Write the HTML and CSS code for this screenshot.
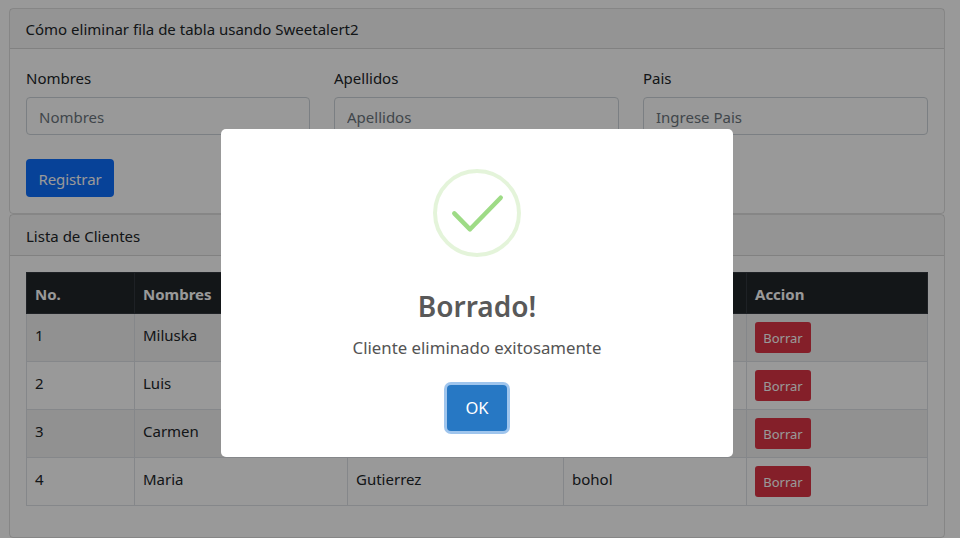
FILE: index.html
```html
<!DOCTYPE html>
<html lang="es">
<head>
<meta charset="utf-8">
<title>Cómo eliminar fila de tabla usando Sweetalert2</title>
<link rel="stylesheet" href="styles.css">
</head>
<body>
<main class="page">
  <section class="card">
    <header class="card-header">Cómo eliminar fila de tabla usando Sweetalert2</header>
    <div class="card-body">
      <form class="form-grid">
        <div class="field"><label>Nombres</label><input placeholder="Nombres"></div>
        <div class="field"><label>Apellidos</label><input placeholder="Apellidos"></div>
        <div class="field"><label>Pais</label><input placeholder="Ingrese Pais"></div>
      </form>
      <button class="btn-primary" type="button">Registrar</button>
    </div>
  </section>
  <section class="card">
    <header class="card-header card-header-tall">Lista de Clientes</header>
    <div class="card-body">
      <table class="table">
        <thead>
          <tr><th class="c1">No.</th><th class="c2">Nombres</th><th class="c3">Apellidos</th><th class="c4">Pais</th><th class="c5">Accion</th></tr>
        </thead>
        <tbody>
          <tr><td>1</td><td>Miluska</td><td></td><td></td><td><button class="btn-danger" type="button">Borrar</button></td></tr>
          <tr><td>2</td><td>Luis</td><td></td><td></td><td><button class="btn-danger" type="button">Borrar</button></td></tr>
          <tr><td>3</td><td>Carmen</td><td></td><td></td><td><button class="btn-danger" type="button">Borrar</button></td></tr>
          <tr><td>4</td><td>Maria</td><td>Gutierrez</td><td>bohol</td><td><button class="btn-danger" type="button">Borrar</button></td></tr>
        </tbody>
      </table>
    </div>
  </section>
</main>
<div class="overlay">
  <div class="modal" role="dialog">
    <svg class="success-icon" width="88" height="88" viewBox="0 0 88 88" aria-hidden="true">
      <circle cx="44" cy="44" r="42" fill="none" stroke="#a5dc86" stroke-opacity=".3" stroke-width="4"/>
      <path d="M21.300 44.300 L37 60.300 L67.700 28.700" fill="none" stroke="#9edb86" stroke-width="4.500" stroke-linecap="round" stroke-linejoin="round"/>
    </svg>
    <h2 class="modal-title">Borrado!</h2>
    <p class="modal-text">Cliente eliminado exitosamente</p>
    <button class="btn-ok" type="button">OK</button>
  </div>
</div>
</body>
</html>
```
FILE: styles.css
```css
* { box-sizing: border-box; }
html, body { height: 100%; }
body {
  margin: 0;
  overflow: hidden;
  background: #fff;
  color: #212529;
  font-family: "Noto Sans", "Open Sans", sans-serif;
  font-size: 15px;
  line-height: 24px;
}
.page {
  width: 936px;
  margin-left: 9px;
  padding-top: 8px;
}
.card {
  border: 1px solid rgba(0, 0, 0, .125);
  border-radius: 4px;
}
.card-header {
  height: 40px;
  padding: 8px 15.500px 6px;
  background: rgba(0, 0, 0, .03);
  border-bottom: 1px solid rgba(0, 0, 0, .125);
}
.card-header-tall {
  height: 41px;
  padding: 9px 16px 6px;
}
.card-body { padding: 16px; }
.form-grid {
  display: grid;
  grid-template-columns: 284px 285px 285px;
  column-gap: 24px;
  margin-bottom: 24px;
}
.field label { display: block; margin: 0 0 8px; height: 24px; padding-top: 1px; }
.field input {
  display: block;
  width: 100%;
  height: 38px;
  padding: 7px 12px 5px;
  border: 1px solid #ced4da;
  border-radius: 4px;
  font: inherit;
  color: #212529;
  background: #fff;
}
.field input::placeholder { color: #6c757d; opacity: 1; }
.btn-primary {
  display: block;
  width: 88px;
  height: 38px;
  padding: 2px 0 0;
  border: 0;
  border-radius: 4px;
  background: #0d6efd;
  color: #fff;
  font: inherit;
  letter-spacing: -.1px;
}
.table {
  width: 901px;
  margin-bottom: 15px;
  border-collapse: collapse;
  table-layout: fixed;
  border: 1px solid #dee2e6;
}
.table th, .table td {
  border: 1px solid #dee2e6;
  padding: 8px;
  text-align: left;
  vertical-align: top;
  line-height: 26px;
}
.table th {
  height: 41px;
  padding-top: 8px;
  padding-bottom: 6px;
  background: #212529;
  border-color: #32383e;
  color: #fff;
  font-weight: 700;
}
.table td { height: 48px; }
.table tbody tr:nth-child(odd) td { background: rgba(0, 0, 0, .05); }
.c1 { width: 108px; }
.c2 { width: 213px; }
.c3 { width: 216px; }
.c4 { width: 183px; }
.c5 { width: 181px; }
.btn-danger {
  display: block;
  width: 56px;
  height: 31px;
  padding: 0;
  border: 0;
  border-radius: 3px;
  background: #dc3545;
  color: #fff;
  font: inherit;
  font-size: 13px;
}
.overlay {
  position: fixed;
  inset: 0;
  display: flex;
  align-items: flex-start;
  justify-content: center;
  padding: 129px 6px 0 0;
  background: rgba(0, 0, 0, .4);
}
.modal {
  display: flex;
  flex-direction: column;
  align-items: center;
  width: 512px;
  height: 328px;
  padding-top: 40px;
  border-radius: 5px;
  background: #fff;
}
.success-icon { display: block; flex: none; }
.modal-title {
  margin: 29px 0 0;
  color: #595959;
  font-size: 28px;
  line-height: 40px;
  font-weight: 600;
}
.modal-text {
  margin: 10px 0 0;
  color: #545454;
  font-size: 16.800px;
  line-height: 24px;
}
.btn-ok {
  width: 60px;
  height: 46px;
  margin-top: 25px;
  padding: 0;
  border: 0;
  border-radius: 4px;
  background: #2778c4;
  color: #fff;
  font: inherit;
  font-size: 16.500px;
  box-shadow: 0 0 0 3px rgba(64, 140, 220, .5);
}
```
